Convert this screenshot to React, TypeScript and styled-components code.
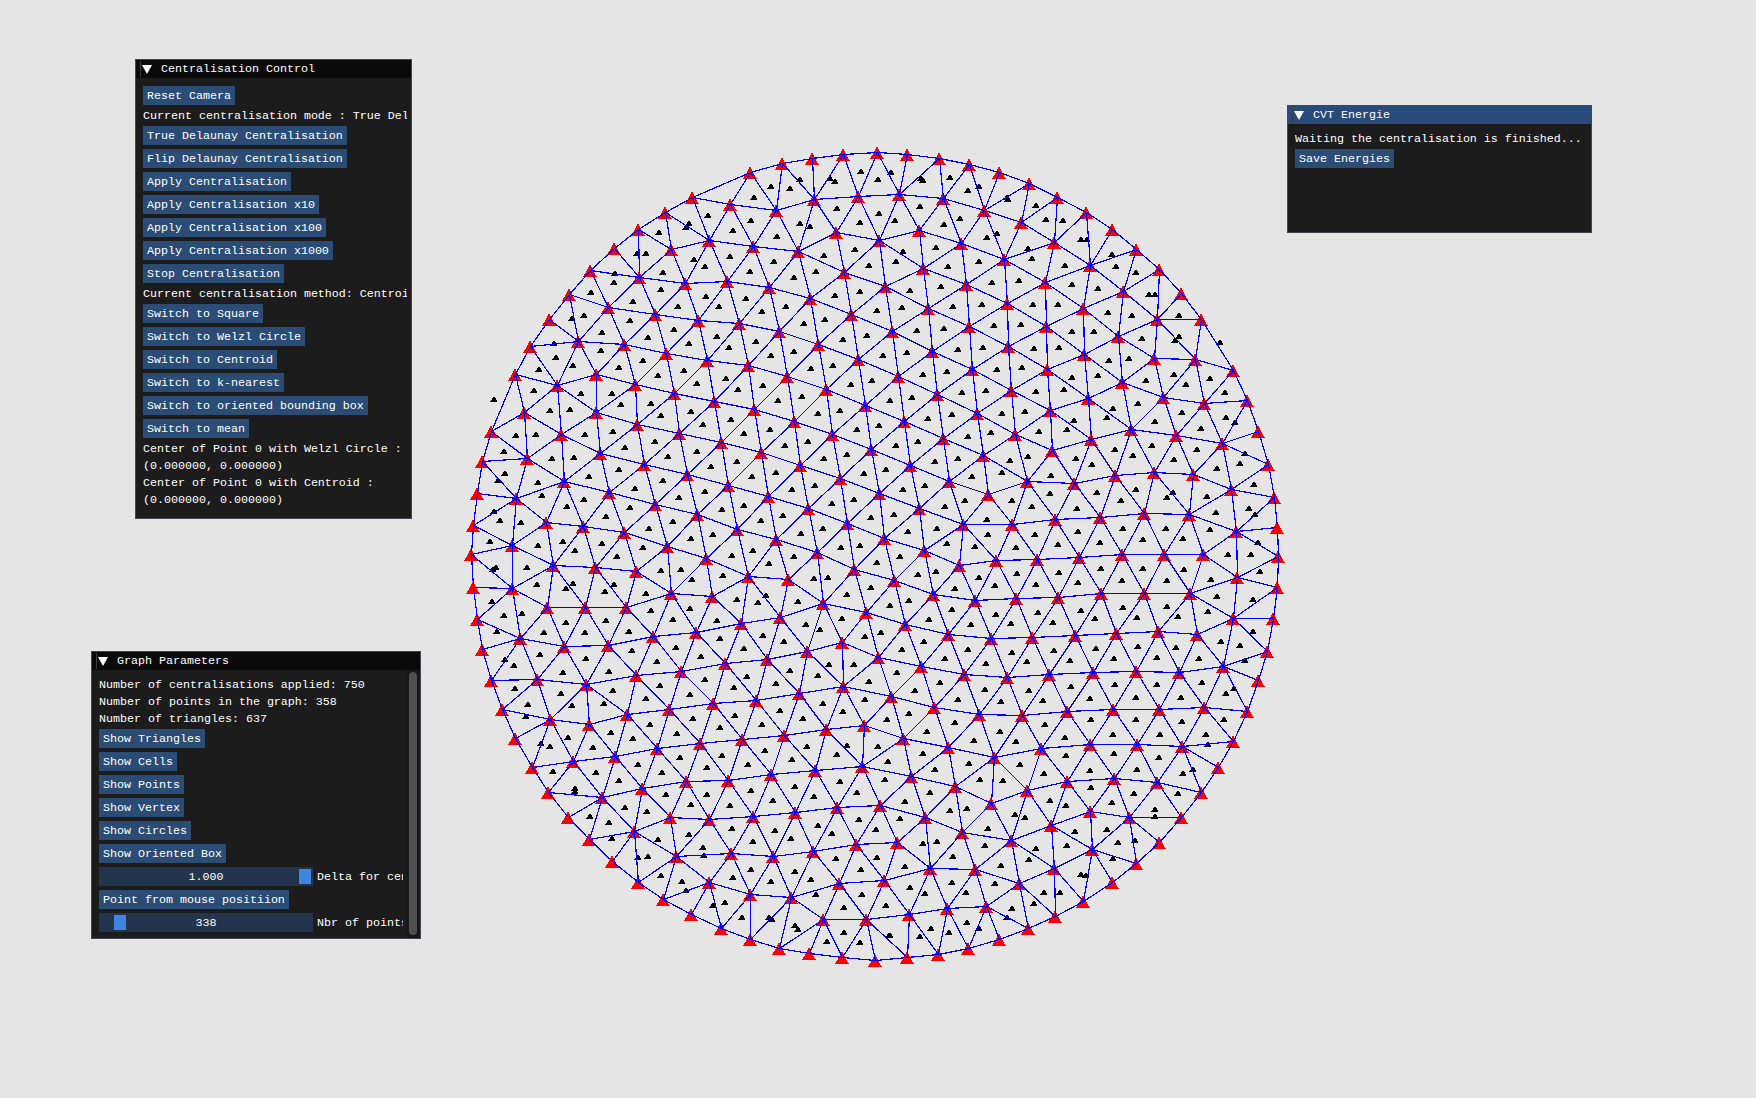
import React from "react";
import styled, { createGlobalStyle } from "styled-components";

const GlobalStyle = createGlobalStyle`
  html, body {
    margin: 0;
    padding: 0;
    background: #e5e5e5;
  }
`;

// vertex positions read off the reference, per quadrant crop (3x coordinates)
const QUADRANTS: { ox: number; oy: number; pts: number[][] }[] = [
  {
    ox: 465,
    oy: 145,
    pts: [
      [1133,28],[1042,38],[950,55],[856,82],[681,155],[599,200],[519,253],[446,310],[375,375],[312,447],[251,522],[196,603],[149,688],[79,858],[52,947],[35,1044],[24,1139],[18,1228],
      [1179,152],[1047,162],[932,196],[796,177],[1114,261],[733,285],[864,302],[1000,318],[618,313],[523,396],[660,413],[785,408],[913,425],[1136,380],[1034,458],[430,487],[569,506],[698,524],[822,533],[943,557],[1158,508],[340,587],[478,597],[603,623],[727,645],[848,660],[1060,597],[1180,642],[394,686],[277,720],[510,716],[627,744],[748,767],[966,692],[1083,732],[1200,780],[176,800],[394,801],[516,836],[867,793],[986,827],[1102,866],[1218,912],[288,866],[642,864],[767,892],[887,921],[1005,960],[1124,1000],[185,939],[405,924],[537,957],[666,986],[790,1019],[908,1052],[1028,1090],[1146,1135],[298,1008],[433,1041],[569,1077],[697,1108],[817,1152],[934,1183],[1056,1220],[152,1058],[243,1130],[355,1142],[478,1161],[142,1200],[607,1202],
    ],
  },
  {
    ox: 875,
    oy: 145,
    pts: [
      [5,22],[96,28],[191,38],[281,57],[373,80],[462,115],[546,155],[633,202],[711,253],[784,312],[851,372],[917,443],[978,522],[1074,675],[1115,766],[1150,858],[1178,957],[1196,1057],[1206,1145],
      [72,147],[205,160],[326,195],[438,232],[132,255],[257,295],[12,285],[538,292],[388,342],[644,360],[143,368],[273,416],[31,423],[511,410],[744,438],[159,488],[396,473],[624,488],[845,523],[282,543],[513,543],[51,558],[730,572],[172,617],[400,604],[626,627],[838,638],[959,641],[68,692],[291,673],[517,673],[742,711],[186,747],[409,735],[638,758],[865,756],[988,773],[305,803],[526,795],[86,828],[204,879],[421,866],[648,882],[768,851],[904,871],[1040,895],[325,930],[532,915],[106,961],[720,989],[837,981],[955,987],[222,1008],[455,1007],[597,1013],[12,1045],[340,1046],[1068,1031],[133,1090],[807,1105],[942,1106],[676,1115],[539,1122],[263,1138],[412,1136],[1083,1158],[28,1178],[146,1215],
    ],
  },
  {
    ox: 465,
    oy: 555,
    pts: [
      [25,97],[35,192],[52,282],[79,375],[111,462],[151,550],[200,635],[250,712],[308,787],[371,852],[442,918],[519,982],[594,1032],[678,1078],[767,1120],[856,1153],[943,1178],[1033,1195],[1130,1207],
      [265,30],[390,37],[514,47],[723,8],[848,63],[968,72],[1166,42],[142,100],[618,115],[740,123],[246,156],[361,156],[482,155],[1073,145],[1203,170],[946,186],[827,205],[692,231],[565,242],[164,250],[297,273],[428,269],[1130,261],[1025,288],[905,312],[780,325],[648,347],[512,361],[217,372],[364,387],[1003,415],[1133,393],[873,434],[744,443],[613,461],[485,477],[1196,510],[1082,523],[958,539],[831,553],[705,563],[575,578],[256,491],[372,506],[451,602],[325,618],[1190,633],[1051,645],[919,658],[789,675],[663,677],[532,698],[410,725],[1115,757],[989,772],[864,782],[733,793],[616,787],[507,829],[1172,867],[1043,889],[924,902],[799,893],[634,903],[1121,983],[731,980],[855,1018],[977,1026],[1073,1092],[1203,1092],
    ],
  },
  {
    ox: 875,
    oy: 555,
    pts: [
      [1208,3],[1207,95],[1194,190],[1175,287],[1150,375],[1115,467],[1073,558],[1030,635],[979,712],[919,785],[851,860],[783,925],[710,980],[624,1037],[540,1083],[460,1118],[373,1152],[278,1178],[188,1197],[95,1207],[0,1215],
      [985,-3],[866,-3],[740,-3],[613,5],[487,12],[363,15],[252,30],[1085,65],[58,75],[173,118],[301,135],[423,130],[549,125],[678,115],[808,113],[945,115],[1073,190],[91,208],[220,236],[348,250],[472,245],[600,240],[724,233],[849,229],[965,236],[10,305],[137,332],[267,358],[396,365],[522,358],[653,352],[782,348],[911,350],[1043,332],[47,422],[177,455],[312,478],[440,480],[576,467],[715,461],[851,461],[986,457],[83,548],[219,575],[358,605],[498,580],[645,568],[786,567],[922,574],[107,663],[240,692],[455,704],[577,677],[716,670],[847,682],[14,750],[150,785],[348,743],[645,769],[763,787],[262,832],[527,810],[65,862],[407,856],[651,882],[165,938],[301,941],[538,938],[27,975],[432,985],[101,1076],[216,1058],[334,1052],
    ],
  },
];

type Pt = [number, number];
type Tri = { a: number; b: number; c: number; cx: number; cy: number; r2: number };

const circum = (pts: Pt[], a: number, b: number, c: number): Tri => {
  const [ax, ay] = pts[a];
  const [bx, by] = pts[b];
  const [cx, cy] = pts[c];
  const d = 2 * (ax * (by - cy) + bx * (cy - ay) + cx * (ay - by)) || 1e-9;
  const a2 = ax * ax + ay * ay;
  const b2 = bx * bx + by * by;
  const c2 = cx * cx + cy * cy;
  const ux = (a2 * (by - cy) + b2 * (cy - ay) + c2 * (ay - by)) / d;
  const uy = (a2 * (cx - bx) + b2 * (ax - cx) + c2 * (bx - ax)) / d;
  return { a, b, c, cx: ux, cy: uy, r2: (ax - ux) ** 2 + (ay - uy) ** 2 };
};

// plain Bowyer-Watson, 358 points is nothing
const triangulate = (input: Pt[]) => {
  const n = input.length;
  const pts: Pt[] = [...input, [-20000, -20000], [30000, -20000], [875, 40000]];
  let tris = [circum(pts, n, n + 1, n + 2)];
  for (let i = 0; i < n; i++) {
    const [x, y] = pts[i];
    const bad = tris.filter((t) => (x - t.cx) ** 2 + (y - t.cy) ** 2 < t.r2);
    const edges = new Map<string, [number, number]>();
    bad.forEach((t) => {
      ([[t.a, t.b], [t.b, t.c], [t.c, t.a]] as [number, number][]).forEach(([p, q]) => {
        const key = p < q ? `${p}-${q}` : `${q}-${p}`;
        if (edges.has(key)) edges.delete(key);
        else edges.set(key, [p, q]);
      });
    });
    tris = tris.filter((t) => !bad.includes(t));
    edges.forEach(([p, q]) => tris.push(circum(pts, p, q, i)));
  }
  return tris.filter((t) => t.a < n && t.b < n && t.c < n);
};

const points: Pt[] = QUADRANTS.flatMap((q) =>
  q.pts.map(([x, y]) => [q.ox + x / 3, q.oy + y / 3] as Pt)
);
const triangles = triangulate(points);

// snapped to pixel centres so straight runs stay one pixel wide
const snap = (v: number) => Math.round(v) + 0.5;

const edgePath = (() => {
  const seen = new Set<string>();
  let d = "";
  triangles.forEach((t) => {
    [[t.a, t.b], [t.b, t.c], [t.c, t.a]].forEach(([p, q]) => {
      const key = p < q ? `${p}-${q}` : `${q}-${p}`;
      if (seen.has(key)) return;
      seen.add(key);
      d += `M${snap(points[p][0])} ${snap(points[p][1])}L${snap(points[q][0])} ${snap(points[q][1])}`;
    });
  });
  return d;
})();

const markerPath = (x: number, y: number, up: number, down: number, half: number) => {
  const rx = Math.round(x);
  const ry = Math.round(y);
  return `M${rx} ${ry - up}L${rx + half} ${ry + down}L${rx - half} ${ry + down}Z`;
};

const vertexPath = points.map(([x, y]) => markerPath(x, y, 6, 7, 6.8)).join("");
const centerPath = triangles
  .filter((t) => Math.hypot(t.cx - 875, t.cy - 555) < 412)
  .map((t) => markerPath(t.cx, t.cy, 3, 3, 3.8))
  .join("");

const Desktop = styled.div`
  position: relative;
  width: 1756px;
  height: 1098px;
  overflow: hidden;
  background: #e5e5e5;
  font-family: "Liberation Mono", "DejaVu Sans Mono", monospace;
  font-size: 11.67px;
  line-height: 13px;
  color: #ffffff;
`;

const MeshCanvas = styled.svg`
  position: absolute;
  left: 0;
  top: 0;
`;

const ImWindow = styled.section<{ $x: number; $y: number; $w: number; $h: number }>`
  position: absolute;
  left: ${(p) => p.$x}px;
  top: ${(p) => p.$y}px;
  width: ${(p) => p.$w}px;
  height: ${(p) => p.$h}px;
  box-sizing: border-box;
  display: flex;
  flex-direction: column;
  background: #1c1c1c;
  border: 1px solid #45454f;
`;

const TitleBar = styled.div<{ $active?: boolean }>`
  flex: none;
  height: 18px;
  display: flex;
  align-items: center;
  background: ${(p) => (p.$active ? "#294a7a" : "#0a0a0a")};
`;

const ArrowIcon = styled.svg`
  flex: none;
  margin: 0 9px 0 4px;
  border-left: 1px solid #3a3a3a;
  padding-left: 1px;
`;

const WindowBody = styled.div`
  flex: 1;
  min-height: 0;
  display: flex;
`;

const Content = styled.div<{ $right: number }>`
  flex: 1;
  min-width: 0;
  margin: 8px ${(p) => p.$right}px 0 7px;
  display: flex;
  flex-direction: column;
  align-items: flex-start;
  gap: 4px;
  overflow: hidden;
`;

const Line = styled.div`
  height: 13px;
  line-height: 15px;
  white-space: nowrap;
`;

const Button = styled.button`
  flex: none;
  height: 19px;
  margin: 0;
  padding: 2px 4px 0;
  border: 0;
  background: #2b4d75;
  color: #ffffff;
  font: inherit;
  white-space: nowrap;
`;

const SliderRow = styled.div`
  flex: none;
  display: flex;
  align-items: center;
  gap: 4px;
  height: 19px;
  white-space: nowrap;
`;

const SliderTrack = styled.div`
  position: relative;
  flex: none;
  width: 214px;
  height: 19px;
  background: #23344f;
  display: flex;
  align-items: center;
  justify-content: center;
`;

const SliderGrab = styled.span<{ $left: number }>`
  position: absolute;
  left: ${(p) => p.$left}px;
  top: 2px;
  width: 12px;
  height: 15px;
  background: #3d85e0;
`;

const SliderText = styled.span`
  position: relative;
  padding-top: 2px;
`;

const ScrollTrack = styled.div`
  flex: none;
  width: 14px;
  padding: 2px 3px 3px;
  box-sizing: border-box;
  background: #181818;
  display: flex;
`;

const ScrollThumb = styled.div`
  flex: 1;
  border-radius: 4px;
  background: #4f4f4f;
`;

const TitleHead = ({ title, active }: { title: string; active?: boolean }) => (
  <TitleBar $active={active}>
    <ArrowIcon width="10" height="16" viewBox="0 0 10 16">
      <polygon points="0,4 10,4 5,13" fill="#ffffff" />
    </ArrowIcon>
    {title}
  </TitleBar>
);

const Slider = ({ value, grab, label }: { value: string; grab: number; label: string }) => (
  <SliderRow>
    <SliderTrack>
      <SliderGrab $left={grab} />
      <SliderText>{value}</SliderText>
    </SliderTrack>
    <SliderText>{label}</SliderText>
  </SliderRow>
);

const modeButtons = [
  "True Delaunay Centralisation",
  "Flip Delaunay Centralisation",
  "Apply Centralisation",
  "Apply Centralisation x10",
  "Apply Centralisation x100",
  "Apply Centralisation x1000",
  "Stop Centralisation",
];

const methodButtons = [
  "Switch to Square",
  "Switch to Welzl Circle",
  "Switch to Centroid",
  "Switch to k-nearest",
  "Switch to oriented bounding box",
  "Switch to mean",
];

const showButtons = [
  "Show Triangles",
  "Show Cells",
  "Show Points",
  "Show Vertex",
  "Show Circles",
  "Show Oriented Box",
];

const App = () => (
  <Desktop>
    <GlobalStyle />
    <MeshCanvas width="1756" height="1098" viewBox="0 0 1756 1098">
      <path d={centerPath} fill="#000000" shapeRendering="crispEdges" />
      <path d={vertexPath} fill="#ff0000" shapeRendering="crispEdges" />
      <path d={edgePath} fill="none" stroke="#0000ff" strokeWidth="1.2" shapeRendering="crispEdges" />
    </MeshCanvas>

    <ImWindow $x={135} $y={59} $w={277} $h={460}>
      <TitleHead title="Centralisation Control" />
      <WindowBody>
        <Content $right={4}>
          <Button>Reset Camera</Button>
          <Line>Current centralisation mode : True Delaunay</Line>
          {modeButtons.map((label) => (
            <Button key={label}>{label}</Button>
          ))}
          <Line>Current centralisation method: Centroid</Line>
          {methodButtons.map((label) => (
            <Button key={label}>{label}</Button>
          ))}
          <Line>Center of Point 0 with Welzl Circle :</Line>
          <Line>(0.000000, 0.000000)</Line>
          <Line>Center of Point 0 with Centroid :</Line>
          <Line>(0.000000, 0.000000)</Line>
        </Content>
      </WindowBody>
    </ImWindow>

    <ImWindow $x={91} $y={651} $w={330} $h={288}>
      <TitleHead title="Graph Parameters" />
      <WindowBody>
        <Content $right={3}>
          <Line>Number of centralisations applied: 750</Line>
          <Line>Number of points in the graph: 358</Line>
          <Line>Number of triangles: 637</Line>
          {showButtons.map((label) => (
            <Button key={label}>{label}</Button>
          ))}
          <Slider value="1.000" grab={200} label="Delta for centroid" />
          <Button>Point from mouse positiion</Button>
          <Slider value="338" grab={15} label="Nbr of points" />
        </Content>
        <ScrollTrack>
          <ScrollThumb />
        </ScrollTrack>
      </WindowBody>
    </ImWindow>

    <ImWindow $x={1287} $y={105} $w={305} $h={128}>
      <TitleHead title="CVT Energie" active />
      <WindowBody>
        <Content $right={4}>
          <Line>Waiting the centralisation is finished...</Line>
          <Button>Save Energies</Button>
        </Content>
      </WindowBody>
    </ImWindow>
  </Desktop>
);

export default App;
